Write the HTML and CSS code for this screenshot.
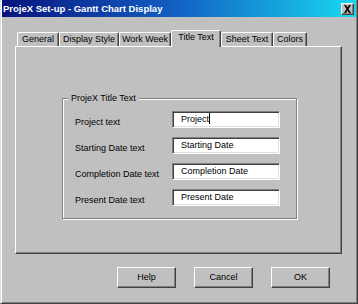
FILE: index.html
```html
<!DOCTYPE html>
<html>
<head>
<meta charset="utf-8">
<link rel="stylesheet" href="styles.css">
</head>
<body>
<div class="window">
  <div class="titlebar">
    <span class="title">ProjeX Set-up - Gantt Chart Display</span>
    <span class="close"><svg width="9" height="8" viewBox="0 0 9 8"><path d="M1 0h2l1.5 2.5L6 0h2L5.5 4 8 8H6L4.5 5.5 3 8H1l2.5-4z" fill="#000"/></svg></span>
  </div>
  <div class="client">
    <div class="tabs">
      <div class="tab w-general">General</div>
      <div class="tab w-display">Display Style</div>
      <div class="tab w-work">Work Week</div>
      <div class="tab active w-title">Title Text</div>
      <div class="tab w-sheet">Sheet Text</div>
      <div class="tab w-colors">Colors</div>
    </div>
    <div class="panel">
      <div class="group">
        <span class="legend">ProjeX Title Text</span>
        <div class="form">
          <span class="label">Project text</span>
          <div class="field">Project<span class="caret"></span></div>
          <span class="label">Starting Date text</span>
          <div class="field">Starting Date</div>
          <span class="label">Completion Date text</span>
          <div class="field">Completion Date</div>
          <span class="label">Present Date text</span>
          <div class="field">Present Date</div>
        </div>
      </div>
    </div>
    <div class="buttons">
      <div class="btn">Help</div>
      <div class="btn">Cancel</div>
      <div class="btn">OK</div>
    </div>
  </div>
</div>
</body>
</html>
```
FILE: styles.css
```css
* { box-sizing: border-box; }
html, body { margin: 0; padding: 0; }
body {
  background: #c0c0c0;
  font-family: "Liberation Sans", Arial, sans-serif;
  font-size: 9px;
  color: #000;
}
.window {
  width: 358px;
  height: 304px;
  background: #c0c0c0;
  border-left: 1px solid #dfdfdf;
  border-right: 1px solid #404040;
  border-bottom: 1px solid #404040;
  box-shadow: inset 1px 0 #fff, inset -1px -1px #808080;
  padding: 0 1px 1px 1px;
}
.titlebar {
  height: 17px;
  background: linear-gradient(to right, #08147e 0%, #1262c4 50%, #18d8f0 100%);
  display: flex;
  align-items: center;
  justify-content: space-between;
  padding-left: 1px;
  padding-right: 2px;
}
.title {
  color: #fff;
  font-weight: bold;
  font-size: 9.5px;
  white-space: nowrap;
}
.close {
  width: 13px;
  height: 12px;
  background: #c0c0c0;
  border-top: 1px solid #fff;
  border-left: 1px solid #fff;
  border-right: 1px solid #404040;
  border-bottom: 1px solid #404040;
  box-shadow: inset -1px -1px #808080;
  display: flex;
  align-items: center;
  justify-content: center;
  margin-top: 1px;
}
.close svg { display: block; }
.client {
  padding-left: 13px;
  padding-top: 13px;
}
.tabs {
  display: flex;
  align-items: flex-end;
  height: 16px;
  padding-left: 2px;
}
.tab {
  height: 14px;
  border-top: 1px solid #fff;
  border-left: 1px solid #fff;
  border-right: 1px solid #404040;
  box-shadow: inset -1px 0 #808080;
  border-radius: 2px 2px 0 0;
  text-align: center;
  line-height: 12px;
  white-space: nowrap;
  background: #c0c0c0;
}
.tab.active {
  height: 17px;
  margin-bottom: -1px;
  position: relative;
  z-index: 1;
  line-height: 13px;
}
.w-general { width: 42px; }
.w-display { width: 60px; }
.w-work { width: 52px; }
.w-title { width: 50px; }
.w-sheet { width: 52px; }
.w-colors { width: 34px; }
.panel {
  width: 327px;
  height: 208px;
  border-top: 1px solid #fff;
  border-left: 1px solid #fff;
  border-right: 1px solid #404040;
  border-bottom: 1px solid #404040;
  box-shadow: inset -1px -1px #808080;
  padding-left: 46px;
  padding-top: 51px;
}
.group {
  position: relative;
  width: 235px;
  height: 121px;
  border: 1px solid #808080;
  box-shadow: inset 1px 1px #fff, 1px 1px #fff;
  padding: 12px 0 0 12px;
}
.legend {
  position: absolute;
  left: 5px;
  top: -7px;
  background: #c0c0c0;
  padding: 0 3px;
  line-height: 12px;
}
.form {
  display: grid;
  grid-template-columns: 97px 108px;
  row-gap: 9px;
}
.label {
  line-height: 12px;
  padding-top: 5px;
  white-space: nowrap;
}
.field {
  height: 17px;
  background: #fff;
  border-top: 1px solid #808080;
  border-left: 1px solid #808080;
  border-bottom: 1px solid #fff;
  border-right: 1px solid #fff;
  box-shadow: inset 1px 1px #404040, inset -1px -1px #dfdfdf;
  padding-left: 8px;
  line-height: 14px;
  white-space: nowrap;
}
.caret {
  display: inline-block;
  width: 1px;
  height: 11px;
  background: #000;
  vertical-align: -2px;
}
.buttons {
  width: 327px;
  display: flex;
  justify-content: flex-end;
  gap: 18px;
  padding-right: 12px;
  margin-top: 13px;
}
.btn {
  width: 59px;
  height: 21px;
  border-top: 1px solid #fff;
  border-left: 1px solid #fff;
  border-right: 1px solid #404040;
  border-bottom: 1px solid #404040;
  box-shadow: inset -1px -1px #808080;
  text-align: center;
  line-height: 19px;
}
```
